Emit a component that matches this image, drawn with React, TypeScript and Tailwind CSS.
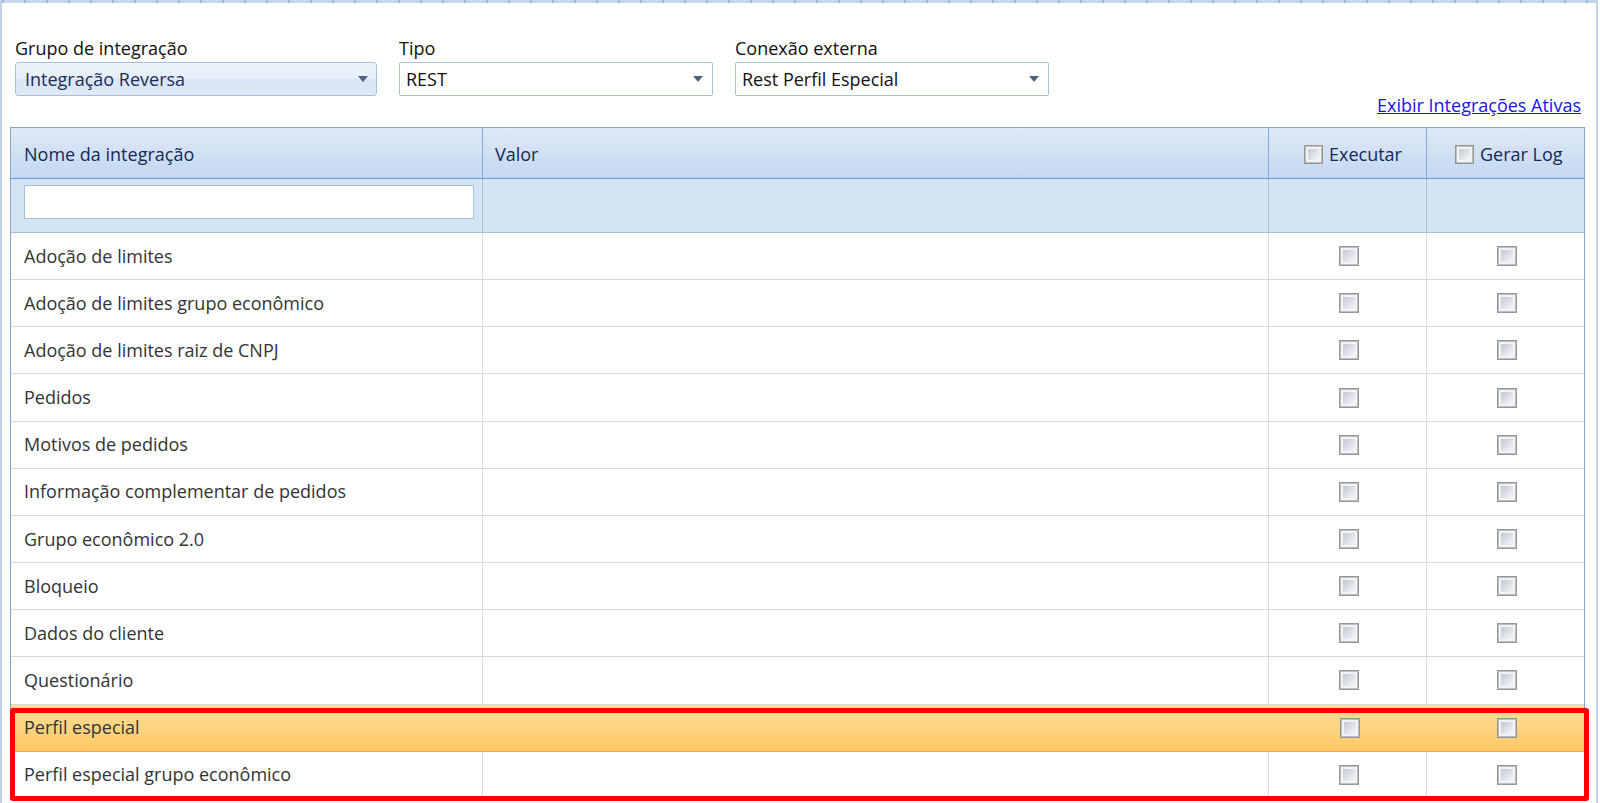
import React from "react";

const rows = [
  "Adoção de limites",
  "Adoção de limites grupo econômico",
  "Adoção de limites raiz de CNPJ",
  "Pedidos",
  "Motivos de pedidos",
  "Informação complementar de pedidos",
  "Grupo econômico 2.0",
  "Bloqueio",
  "Dados do cliente",
  "Questionário",
  "Perfil especial",
  "Perfil especial grupo econômico",
];

const HIGHLIGHT = "Perfil especial";

function Caret() {
  return (
    <svg width="10" height="6" viewBox="0 0 10 6" className="shrink-0">
      <path d="M0 0h10L5 6z" fill="#4f6280" />
    </svg>
  );
}

function Checkbox({ size = "w-5 h-5" }: { size?: string }) {
  return (
    <div className={`${size} shrink-0 border border-[#969696] bg-[#bdbdbd] p-px`}>
      <div className="h-full w-full border-2 border-[#f2f3f5] bg-gradient-to-br from-[#c0c9d6] to-[#f6f7f9]" />
    </div>
  );
}

function Select({
  label,
  value,
  width,
  glossy,
}: {
  label: string;
  value: string;
  width: string;
  glossy?: boolean;
}) {
  return (
    <div className={`flex flex-col ${width}`}>
      <span className="mb-[3px] leading-[22px] text-[#111]">{label}</span>
      {glossy ? (
        <div className="flex h-[34px] items-center justify-between rounded-[3px] border border-[#a7bfdc] bg-[linear-gradient(#edf3fb_0%,#e6eef9_50%,#d9e5f5_51%,#e1ebf8_100%)] pl-[9px] pr-[8px]">
          <span className="text-[#1c2d58]">{value}</span>
          <Caret />
        </div>
      ) : (
        <div className="flex h-[34px] items-center justify-between rounded-[2px] border border-[#abc0da] bg-white pl-[6px] pr-[9px]">
          <span className="text-[#111]">{value}</span>
          <Caret />
        </div>
      )}
    </div>
  );
}

export default function App() {
  return (
    <div
      className="relative h-[803px] w-[1600px] overflow-hidden bg-white text-[18px]"
      style={{ fontFamily: "'Open Sans', 'Noto Sans', sans-serif" }}
    >
      <div className="flex h-full w-[1598px] flex-col border-x-2 border-[#c0d2e9]">
        <div className="h-[3px] w-full bg-[repeating-linear-gradient(90deg,#9db7d8_0px,#9db7d8_2px,#c6d7ec_2px,#c6d7ec_22px)]" />

        <div className="flex gap-[22px] pl-[13px] pt-[34px]">
          <Select label="Grupo de integração" value="Integração Reversa" width="w-[362px]" glossy />
          <Select label="Tipo" value="REST" width="w-[314px]" />
          <Select label="Conexão externa" value="Rest Perfil Especial" width="w-[314px]" />
        </div>

        <div className="-mt-[2px] flex justify-end pr-[15px]">
          <a href="#" className="leading-[22px] text-[#1a12f0] underline">
            Exibir Integrações Ativas
          </a>
        </div>

        <div className="ml-[8px] mt-[11px] w-[1575px] border border-[#86a3c8]">
          {/* header */}
          <div className="grid h-[51px] grid-cols-[472px_786px_158px_1fr] border-b border-[#6f9ad0] bg-[linear-gradient(#dfe9f6,#c3d8f0)] text-[#15295a]">
            <div className="flex items-center border-r border-[#86a9d5] pl-[13px] pt-[2px]">Nome da integração</div>
            <div className="flex items-center border-r border-[#86a9d5] pl-[12px] pt-[2px]">Valor</div>
            <div className="flex items-center gap-[6px] border-r border-[#86a9d5] pl-[35px] pt-[2px]">
              <Checkbox size="w-[19px] h-[19px]" />
              <span>Executar</span>
            </div>
            <div className="flex items-center gap-[6px] pl-[28px] pt-[2px]">
              <Checkbox size="w-[19px] h-[19px]" />
              <span>Gerar Log</span>
            </div>
          </div>

          {/* filter row */}
          <div className="grid h-[54px] grid-cols-[472px_786px_158px_1fr] border-b border-[#a8bed9] bg-[#d5e4f3]">
            <div className="border-r border-[#a8bed9] pl-[13px] pt-[6px]">
              <input className="h-[34px] w-[450px] border border-[#a9bfd8] bg-white outline-none" />
            </div>
            <div className="border-r border-[#a8bed9]" />
            <div className="border-r border-[#a8bed9]" />
            <div />
          </div>

          {rows.map((name) => {
            const hl = name === HIGHLIGHT;
            return (
              <div
                key={name}
                className={
                  hl
                    ? "grid h-[47.17px] grid-cols-[472px_786px_158px_1fr] border-b border-[#f1a94b] bg-[linear-gradient(#fedf9a,#fdc865)] text-[#333]"
                    : "grid h-[47.17px] grid-cols-[472px_786px_158px_1fr] border-b border-[#d4dbe7] text-[#333]"
                }
              >
                <div className={`flex items-center pl-[13px] ${hl ? "" : "border-r border-[#d4dbe7]"}`}>{name}</div>
                <div className={hl ? "" : "border-r border-[#d4dbe7]"} />
                <div className={`flex items-center justify-center pl-[3px] ${hl ? "" : "border-r border-[#d4dbe7]"}`}>
                  <Checkbox />
                </div>
                <div className="flex items-center justify-center pl-[3px]">
                  <Checkbox />
                </div>
              </div>
            );
          })}
        </div>
      </div>

      {/* annotation box */}
      <div className="pointer-events-none absolute left-[10px] top-[708px] h-[93px] w-[1579px] rounded-[3px] border-[5px] border-[#ff0000]" />
    </div>
  );
}
